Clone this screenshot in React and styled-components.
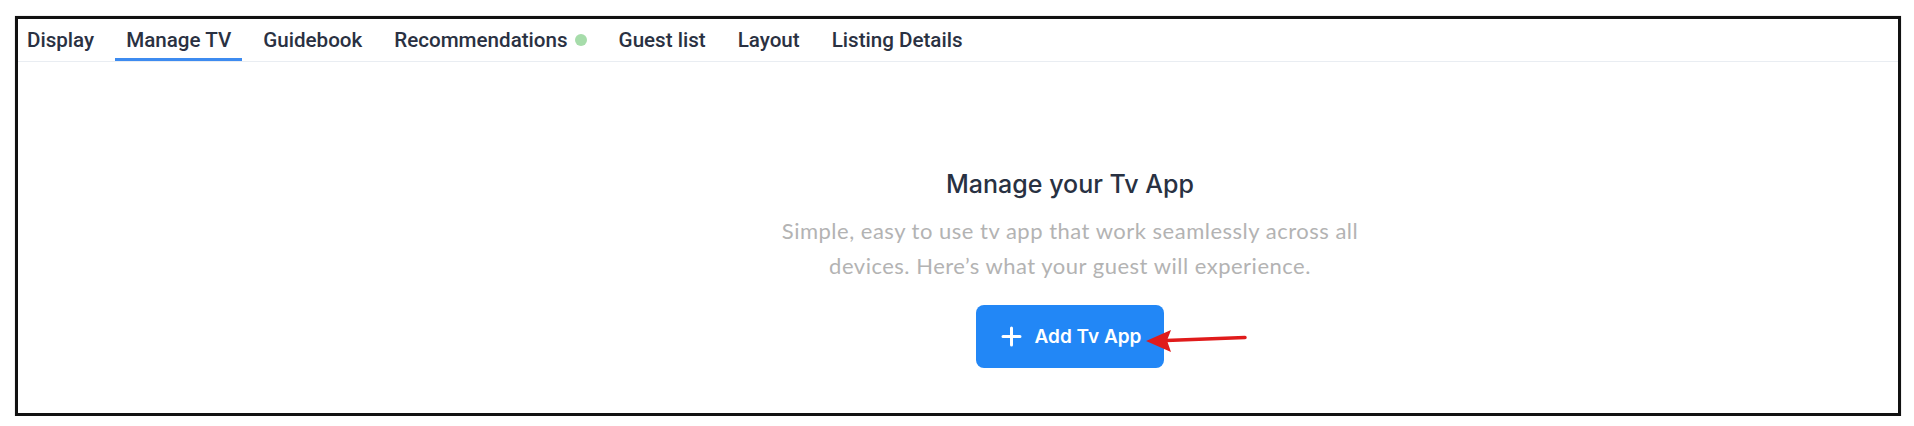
import styled, { createGlobalStyle } from "styled-components";

const GlobalStyle = createGlobalStyle`
  body {
    margin: 0;
    background: #ffffff;
    font-family: Roboto, "Liberation Sans", sans-serif;
  }
`;

const Frame = styled.div`
  box-sizing: border-box;
  width: 1886px;
  height: 400px;
  margin: 16px 0 0 15px;
  border: 3px solid #111111;
  box-shadow: 0 0 1px rgba(0, 0, 0, 0.35);
  display: flex;
  flex-direction: column;
  background: #fff;
`;

const TabBar = styled.nav`
  display: flex;
  align-items: stretch;
  gap: 10px;
  height: 42px;
  border-bottom: 1px solid #e9edf2;
`;

const Tab = styled.div`
  display: flex;
  align-items: center;
  gap: 7px;
  padding: 3px 11px 0 ${(p) => (p.first ? "9px" : "11px")};
  font-family: Roboto, "Liberation Sans", sans-serif;
  font-size: 20.6px;
  font-weight: 500;
  color: #2a3142;
  box-sizing: border-box;
  border-bottom: 3px solid ${(p) => (p.active ? "#3d8bf0" : "transparent")};
`;

const Dot = styled.span`
  width: 12px;
  height: 12px;
  border-radius: 50%;
  background: #a6dcaa;
`;

const Content = styled.main`
  flex: 1;
  display: flex;
  flex-direction: column;
  align-items: center;
  padding: 107px 0 0 224px;
`;

const Heading = styled.h2`
  margin: 0;
  font-family: Inter, "Noto Sans", sans-serif;
  font-size: 25px;
  line-height: 30px;
  font-weight: 500;
  color: #283142;
`;

const Subtitle = styled.p`
  margin: 14px 0 0;
  width: 600px;
  text-align: center;
  font-family: Lato, "Noto Sans", sans-serif;
  font-size: 22px;
  line-height: 35px;
  font-weight: 400;
  letter-spacing: 0.5px;
  color: #b3b3b3;
`;

const ButtonWrap = styled.div`
  position: relative;
  margin-top: 22px;
`;

const AddButton = styled.button`
  display: flex;
  align-items: center;
  gap: 13px;
  height: 63px;
  padding: 0 23px 0 25px;
  border: none;
  border-radius: 8px;
  background: #2287f6;
  color: #ffffff;
  font-family: Inter, Roboto, sans-serif;
  font-size: 19px;
  font-weight: 600;
  cursor: pointer;
`;

const Arrow = styled.svg`
  position: absolute;
  left: calc(100% - 18px);
  top: 24px;
  overflow: visible;
`;

const tabs = [
  "Display",
  "Manage TV",
  "Guidebook",
  "Recommendations",
  "Guest list",
  "Layout",
  "Listing Details",
];

const PlusIcon = () => (
  <svg width="21" height="21" viewBox="0 0 21 21">
    <path d="M10.5 2v17M2 10.5h17" stroke="#fff" strokeWidth="3" strokeLinecap="round" />
  </svg>
);

const App = () => {
  return (
    <>
      <GlobalStyle />
      <Frame>
        <TabBar>
          {tabs.map((t, i) => (
            <Tab key={t} first={i === 0} active={t === "Manage TV"}>
              {t}
              {t === "Recommendations" && <Dot />}
            </Tab>
          ))}
        </TabBar>
        <Content>
          <Heading>Manage your Tv App</Heading>
          <Subtitle>
            Simple, easy to use tv app that work seamlessly across all devices. Here’s what
            your guest will experience.
          </Subtitle>
          <ButtonWrap>
            <AddButton>
              <PlusIcon />
              Add Tv App
            </AddButton>
            <Arrow width="100" height="24" viewBox="0 0 100 24">
              <path d="M20 11.5 L99 8.5" stroke="#e01b1b" strokeWidth="3.5" strokeLinecap="round" />
              <polygon points="0,12 25,1 21,11.5 25,23" fill="#e01b1b" />
            </Arrow>
          </ButtonWrap>
        </Content>
      </Frame>
    </>
  );
};

export default App;
